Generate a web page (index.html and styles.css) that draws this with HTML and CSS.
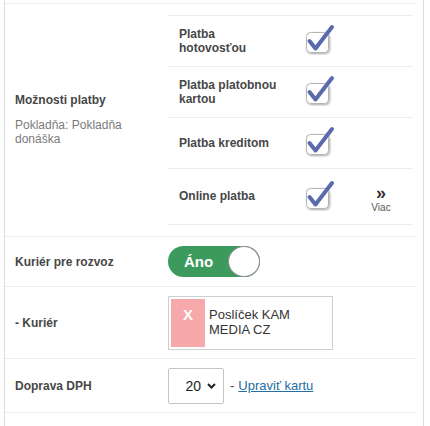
FILE: index.html
```html
<!DOCTYPE html>
<html lang="sk">
<head>
<meta charset="utf-8">
<title>Nastavenia</title>
<link rel="stylesheet" href="styles.css">
</head>
<body>
<div class="panel">
  <div class="lead"></div>

  <div class="row row-pay">
    <div class="label">
      <div class="title">Možnosti platby</div>
      <div class="sub">Pokladňa: Pokladňa donáška</div>
    </div>
    <div class="value">
      <div class="opts">
        <div class="opt">
          <span class="opt-name">Platba hotovosťou</span>
          <svg class="cb" width="30" height="32" viewBox="0 0 30 32"><defs><filter id="s1" x="-20%" y="-20%" width="150%" height="150%"><feDropShadow dx="1" dy="1" stdDeviation="1" flood-color="#000" flood-opacity="0.35"/></filter></defs><rect x="1.5" y="9.5" width="22" height="20" rx="4" fill="#fff" stroke="#b5b5b5" filter="url(#s1)"/><path d="M4.5 18 L10.5 25.5 L27 4" fill="none" stroke="#5a6aac" stroke-width="4" stroke-linecap="round" stroke-linejoin="round"/></svg>
          <span></span>
        </div>
        <div class="opt">
          <span class="opt-name">Platba platobnou kartou</span>
          <svg class="cb" width="30" height="32" viewBox="0 0 30 32"><rect x="1.5" y="9.5" width="22" height="20" rx="4" fill="#fff" stroke="#b5b5b5" filter="url(#s1)"/><path d="M4.5 18 L10.5 25.5 L27 4" fill="none" stroke="#5a6aac" stroke-width="4" stroke-linecap="round" stroke-linejoin="round"/></svg>
          <span></span>
        </div>
        <div class="opt">
          <span class="opt-name">Platba kreditom</span>
          <svg class="cb" width="30" height="32" viewBox="0 0 30 32"><rect x="1.5" y="9.5" width="22" height="20" rx="4" fill="#fff" stroke="#b5b5b5" filter="url(#s1)"/><path d="M4.5 18 L10.5 25.5 L27 4" fill="none" stroke="#5a6aac" stroke-width="4" stroke-linecap="round" stroke-linejoin="round"/></svg>
          <span></span>
        </div>
        <div class="opt opt-last">
          <span class="opt-name">Online platba</span>
          <svg class="cb" width="30" height="32" viewBox="0 0 30 32"><rect x="1.5" y="9.5" width="22" height="20" rx="4" fill="#fff" stroke="#b5b5b5" filter="url(#s1)"/><path d="M4.5 18 L10.5 25.5 L27 4" fill="none" stroke="#5a6aac" stroke-width="4" stroke-linecap="round" stroke-linejoin="round"/></svg>
          <a class="more" href="#"><span class="more-icon">»</span><span class="more-text">Viac</span></a>
        </div>
      </div>
    </div>
  </div>

  <div class="row row-toggle">
    <div class="label"><div class="title">Kuriér pre rozvoz</div></div>
    <div class="value">
      <div class="toggle"><span class="toggle-text">Áno</span><span class="knob"></span></div>
    </div>
  </div>

  <div class="row row-courier">
    <div class="label"><div class="title">- Kuriér</div></div>
    <div class="value">
      <div class="tag-box">
        <span class="tag-x">X</span>
        <span class="tag-text">Poslíček KAM MEDIA CZ</span>
      </div>
    </div>
  </div>

  <div class="row row-vat">
    <div class="label"><div class="title">Doprava DPH</div></div>
    <div class="value">
      <div class="select"><span>20</span><svg width="9" height="6" viewBox="0 0 9 6"><path d="M1 1 L4.5 4.5 L8 1" fill="none" stroke="#222" stroke-width="2"/></svg></div>
      <span class="dash">-</span>
      <a class="link" href="#">Upraviť kartu</a>
    </div>
  </div>

  <div class="row row-empty"></div>
</div>
</body>
</html>
```
FILE: styles.css
```css
* { box-sizing: border-box; }
html, body { margin: 0; padding: 0; background: #fff; }
body {
  font-family: "Liberation Sans", Arial, sans-serif;
  color: #474747;
}
.panel {
  margin-left: 4px;
  width: 420px;
  padding-right: 6px;
  border-left: 1px solid #dcdcdc;
  border-right: 1px solid #dcdcdc;
  min-height: 426px;
  display: flex;
  flex-direction: column;
}
.lead { height: 3px; }
.row {
  display: grid;
  grid-template-columns: 163px 1fr;
  border-top: 1px solid #ebebeb;
  align-items: center;
}
.label { padding-left: 10px; }
.title {
  font-size: 12px;
  font-weight: bold;
  line-height: 14px;
  color: #474747;
}
.sub {
  margin-top: 11px;
  font-size: 12px;
  line-height: 14px;
  color: #7a7a7a;
}
.value {
  display: flex;
  align-items: center;
}

/* payment options */
.row-pay { height: 233px; padding-top: 10px; padding-bottom: 11px; }
.row-pay .value { align-self: stretch; }
.opts {
  flex: 1;
  margin-right: 4px;
  border-bottom: 1px solid #ededed;
}
.opt {
  display: grid;
  grid-template-columns: 127px 60px 30px;
  align-items: center;
  height: 51px;
  padding-left: 11px;
  border-top: 1px solid #ededed;
}
.opt-last { height: 56px; }
.opt-name {
  max-width: 100px;
  font-size: 12px;
  font-weight: bold;
  line-height: 14px;
  color: #474747;
}
.cb { margin-left: -1px; margin-top: -3px; display: block; }
.more {
  display: flex;
  flex-direction: column;
  align-items: center;
  text-decoration: none;
  margin-top: 4px;
}
.more-icon {
  font-size: 18px;
  font-weight: bold;
  line-height: 18px;
  color: #333;
}
.more-text {
  font-size: 10px;
  line-height: 11px;
  color: #555;
}

/* toggle */
.row-toggle { height: 50px; }
.toggle {
  width: 92px;
  height: 31px;
  border-radius: 16px;
  background: #3c9a5c;
  display: flex;
  align-items: center;
  justify-content: space-between;
  padding-left: 16px;
  margin-top: -1px;
}
.toggle-text {
  color: #fff;
  font-weight: bold;
  font-size: 15px;
}
.knob {
  width: 32px;
  height: 31px;
  border-radius: 50%;
  background: #fff;
  border: 1px solid #8c8c8c;
}

/* courier tag */
.row-courier { height: 72px; }
.tag-box {
  width: 165px;
  height: 54px;
  border: 1px solid #cfcfcf;
  padding: 2px;
  display: flex;
  gap: 4px;
}
.tag-x {
  flex: none;
  width: 34px;
  background: #f7a8ab;
  color: #fff;
  font-weight: bold;
  font-size: 15px;
  line-height: 15px;
  text-align: center;
  padding-top: 8px;
}
.tag-text {
  width: 100px;
  font-size: 13px;
  line-height: 15px;
  color: #333;
  padding-top: 8px;
}

/* vat */
.row-vat { height: 54px; }
.select {
  width: 56px;
  height: 36px;
  border: 1px solid #c4c4c4;
  border-radius: 2px;
  display: flex;
  align-items: center;
  justify-content: flex-end;
  gap: 6px;
  padding-right: 7px;
  font-size: 14px;
  color: #222;
}
.dash {
  margin-left: 6px;
  font-size: 13px;
  color: #474747;
}
.link {
  margin-left: 4px;
  font-size: 13px;
  color: #246ea6;
  text-decoration: underline;
}
.row-empty { flex: 1; }
```
